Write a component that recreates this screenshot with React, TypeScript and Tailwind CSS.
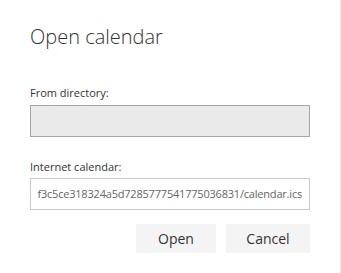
import React from 'react';

const font = { fontFamily: '"Open Sans", "Noto Sans", sans-serif' };

const OpenCalendarDialog: React.FC = () => {
  return (
    <div
      className="w-[341px] h-[273px] bg-white border-r border-[#eaeaea] px-[30px] pt-[23px] box-border"
      style={font}
    >
      <h1 className="text-[20px] leading-[28px] font-light text-[#333333]">Open calendar</h1>

      <label className="block mt-[34px] text-[11px] leading-[16px] text-[#333333]">From directory:</label>
      <div className="mt-[4px] h-[32px] w-[280px] border border-[#a6a6a6] bg-[#eaeaea]" />

      <label className="block mt-[22px] text-[11px] leading-[16px] text-[#333333]">Internet calendar:</label>
      <div className="mt-[3px] h-[32px] w-[280px] border border-[#c8c8c8] bg-white flex items-center justify-end overflow-hidden px-[7px]">
        <span className="whitespace-nowrap text-[11px] tracking-[-0.2px] text-[#666666]">
          f3c5ce318324a5d7285777541775036831/calendar.ics
        </span>
      </div>

      <div className="mt-[14px] flex justify-end gap-[10px]">
        <button className="h-[29px] w-[80px] bg-[#f4f4f4] text-[14px] text-[#333333]">Open</button>
        <button className="h-[29px] w-[84px] bg-[#f4f4f4] text-[14px] text-[#333333]">Cancel</button>
      </div>
    </div>
  );
};

export default function App() {
  return <OpenCalendarDialog />;
}
